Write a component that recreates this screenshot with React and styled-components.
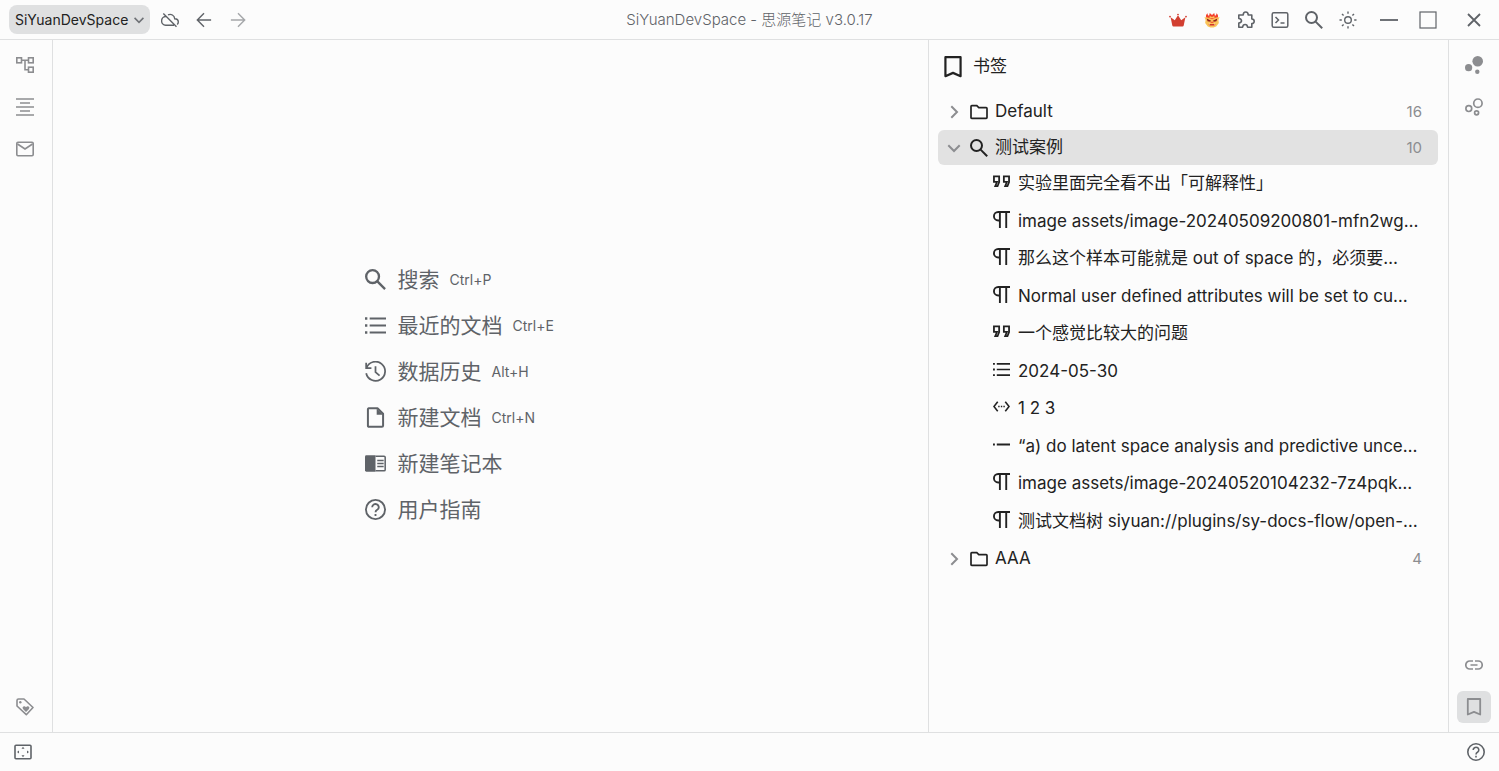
import React from 'react';
import styled, { createGlobalStyle } from 'styled-components';

const GlobalStyle = createGlobalStyle`
  * { box-sizing: border-box; }
  body {
    margin: 0;
    background: #fcfcfc;
    color: #222;
    font-family: Inter, "Noto Sans CJK SC", sans-serif;
    font-size: 17px;
    line-height: 25px;
  }
  button { font: inherit; color: inherit; background: none; border: 0; padding: 0; margin: 0; }
  ul { list-style: none; margin: 0; padding: 0; }
`;

const Page = styled.div`
  display: flex;
  flex-direction: column;
  min-height: 100vh;
`;

const Header = styled.header`
  display: grid;
  grid-template-columns: 1fr auto 1fr;
  align-items: center;
  height: 40px;
  border-bottom: 1px solid #dfe0e1;
  color: #5f6368;
`;

const Group = styled.div`
  display: flex;
  align-items: center;
  justify-content: ${(p) => (p.$end ? 'flex-end' : 'flex-start')};
`;

const Workspace = styled.button`
  display: flex;
  align-items: center;
  justify-content: space-between;
  width: 141px;
  height: 29px;
  margin: 0 3px 0 9px;
  padding: 0 4px 0 6px;
  border-radius: 8px;
  background: #dfe0e1;
  color: #222;
  font-size: 14px;
  svg { color: #6f7276; }
`;

const Title = styled.h1`
  margin: 0;
  font-size: 15px;
  font-weight: 300;
  line-height: 20px;
`;

const BarButton = styled.button`
  display: flex;
  align-items: center;
  justify-content: center;
  width: 34px;
  height: 32px;
  opacity: ${(p) => (p.disabled ? 0.55 : 1)};
`;

const WindowControls = styled.div`
  display: grid;
  grid-template-columns: 35px 43px 50px;
  justify-items: center;
  margin-left: 6px;
`;

const Body = styled.div`
  display: flex;
  flex: 1;
`;

const Dock = styled.nav`
  display: flex;
  flex-direction: column;
  align-items: center;
  gap: 10px;
  flex: none;
  width: ${(p) => (p.$right ? '51px' : '53px')};
  padding: 9px ${(p) => (p.$right ? '0' : '3px')} 9px 0;
  border: 0 solid #dfe0e1;
  border-width: ${(p) => (p.$right ? '0 0 0 1px' : '0 1px 0 0')};
`;

const DockButton = styled.button`
  display: flex;
  align-items: center;
  justify-content: center;
  width: 34px;
  height: 32px;
  border-radius: 6px;
  color: #8c8d90;
  background: ${(p) => (p.$active ? '#dfe0e1' : 'transparent')};
`;

const Spacer = styled.div`
  flex: 1;
`;

const Main = styled.main`
  display: flex;
  flex: 1;
  align-items: center;
  justify-content: center;
  padding-top: 16px;
`;

const Menu = styled.ul`
  width: 252px;
`;

const MenuButton = styled.button`
  display: flex;
  align-items: center;
  height: 46px;
  color: #5f6368;
  font-size: 21px;
  white-space: nowrap;
  svg { margin-right: 12px; }
`;

const Shortcut = styled.kbd`
  margin-left: 10px;
  font-family: inherit;
  font-size: 14px;
`;

const Panel = styled.aside`
  flex: none;
  width: 520px;
  padding: 0 10px 0 9px;
  border-left: 1px solid #dfe0e1;
`;

const PanelTitle = styled.h2`
  display: flex;
  align-items: center;
  gap: 9px;
  height: 53px;
  margin: 0;
  padding-left: 4px;
  font-size: 17px;
  font-weight: 400;
`;

const GroupRow = styled.button`
  display: flex;
  align-items: center;
  width: 100%;
  height: 35px;
  margin-top: 1px;
  padding: 0 16px 0 7px;
  border-radius: 6px;
  background: ${(p) => (p.$open ? '#e2e2e2' : 'transparent')};
`;

const Arrow = styled.span`
  display: flex;
  margin-right: 7px;
  color: #8c8d90;
`;

const GroupName = styled.span`
  margin-left: 7px;
`;

const Count = styled.span`
  margin-left: auto;
  color: #8c8d90;
  font-size: 15px;
`;

const ItemButton = styled.button`
  display: flex;
  align-items: center;
  width: 100%;
  height: 37px;
  padding: 0 16px 0 55px;
  white-space: nowrap;
  li:nth-child(even) > & { height: 38px; }
  svg { margin: 0 8px 4px 0; }
`;

const Footer = styled.footer`
  display: flex;
  align-items: center;
  justify-content: space-between;
  height: 39px;
  padding: 0 6px;
  border-top: 1px solid #dfe0e1;
  color: #5f6368;
`;

const Svg = styled.svg`
  display: block;
  flex: none;
`;

/* Line icons share an 18-unit grid. */
const line = (w) => ({ fill: 'none', stroke: 'currentColor', strokeWidth: w });

const ICONS = {
  down: <path d="M3.300 6.300L9 12l5.700-5.700" {...line(2)} />,
  right: <path d="M6.300 3.300L12 9l-5.700 5.700" {...line(2)} />,
  cloudOff: (
    <path d="M5.300 5.500A4 4 0 0 0 4.700 14.300H13M7 3.900a4.600 4.600 0 0 1 6.700 3.800c2.200 0 3.600 1.400 3.600 3.300 0 1-.4 1.900-1.100 2.500M2.300 2.500l13.200 13.200" {...line(1.4)} />
  ),
  back: <path d="M17 9H2M9 1.500L1.500 9 9 16.500" {...line(1.6)} />,
  forward: <path d="M1 9h15M9 1.500L16.500 9 9 16.500" {...line(1.6)} />,
  crown: (
    <g fill="#d23f31">
      <path d="M1.600 6.300l4.200 3L8.500 5h1l2.700 4.300 4.200-3-1.700 8.200q-.2 1-1.200 1h-9q-1 0-1.200-1z" />
      <circle cx="1" cy="5.600" r=".9" />
      <circle cx="9" cy="3.600" r=".9" />
      <circle cx="17" cy="5.600" r=".9" />
    </g>
  ),
  ogre: (
    <g>
      <path d="M2.500 6.500C1.500 4 2.800 2.300 4 1.500c0 1.700.6 2.600 1.700 2.800L6.500 1 9 3.500 11.500 1l.8 3.300c1.100-.2 1.700-1.100 1.700-2.800 1.200.8 2.500 2.500 1.500 5L13 9H5z" fill="#f4402c" />
      <path d="M6.500 4.500L9 5.500l2.500-1 .5 2.500H6z" fill="#fac35a" />
      <path d="M.5 6l4 .2 4.500 2 4.500-2 4-.2-1.300 3 .5 3.500-3 3.800-3 1.200H7.300l-3-1.200-3-3.800.5-3.500z" fill="#fac35a" />
      <path d="M3 7.200L8 9.800l-1 1.300-3-.7zM15 7.200L10 9.800l1 1.300 3-.7z" fill="#8e1c1c" />
      <path d="M7.800 11h2.400l.6 1.200H7.200z" fill="#f4402c" />
      <path d="M5 13.500h8l-1.500 1.800h-5z" fill="#d0342c" />
      <path d="M5.700 13.300h1.200l-.6 1.200zM11.100 13.300h1.200l-.6 1.200z" fill="#fff" />
    </g>
  ),
  puzzle: (
    <path
      d="M1.800 4h4.400c0-4 5-4 5 0h3.600v4c3.200 0 3.200 4.600 0 4.600v3.600h-4.200c-.4-3.600-4.600-3.600-5 0H1.800v-4.200c3.600-.5 3.600-4 0-4.500z"
      strokeLinejoin="round"
      {...line(1.6)}
    />
  ),
  terminal: (
    <g {...line(1.5)}>
      <rect x="1.200" y="1.700" width="15.600" height="14.600" rx="1.500" />
      <path d="M4.500 6l3 3-3 3M9.500 12h4" />
    </g>
  ),
  search: (
    <g {...line(2)}>
      <circle cx="6.500" cy="6.500" r="5.500" />
      <path d="M10.600 10.600l6.600 6.600" />
    </g>
  ),
  sun: (
    <g {...line(1.4)}>
      <circle cx="9" cy="9" r="3.300" />
      <path d="M9 .5v2.300M9 15.200v2.300M.5 9h2.300M15.200 9h2.300M3 3l1.600 1.600M13.400 13.400L15 15M15 3l-1.600 1.600M4.600 13.400L3 15" />
    </g>
  ),
  minimize: <path d="M0 9h18" {...line(1.8)} />,
  maximize: <rect x="1" y="1" width="16" height="16" {...line(1.2)} />,
  close: <path d="M3 3l12 12M15 3L3 15" {...line(1.8)} />,
  tree: (
    <g {...line(1.6)}>
      <rect x=".8" y="1.800" width="4.700" height="5" />
      <rect x="12.500" y="1.800" width="4.700" height="5" />
      <rect x="12.500" y="11.200" width="4.700" height="5" />
      <path d="M5.500 4.300h7M9 4.300v9.400h3.500" />
    </g>
  ),
  outline: <path d="M0 1h18M4 5h10M0 9h18M4 13h10M0 17h18" {...line(1.7)} />,
  mail: (
    <g {...line(1.6)}>
      <rect x=".8" y="2.300" width="16.400" height="13.400" rx="1.200" />
      <path d="M1.500 4L9 9l7.500-5" />
    </g>
  ),
  tag: (
    <g>
      <path d="M1 2.500Q1 1 2.500 1H8l9 8.500-6.700 7.200L1 8z" strokeLinejoin="round" {...line(1.6)} />
      <circle cx="4.300" cy="4.300" r="1.200" fill="currentColor" />
      <path d="M10 14l-3-3C5.500 8.500 8.700 7.300 10 9.300c1.300-2 4.500-.8 3 1.700z" fill="currentColor" />
    </g>
  ),
  bubbles: (
    <g fill="currentColor">
      <circle cx="12.700" cy="5.300" r="5.300" />
      <circle cx="3.600" cy="11.700" r="3.600" />
      <circle cx="12.300" cy="15.700" r="2.200" />
    </g>
  ),
  bubbleLines: (
    <g {...line(1.7)}>
      <circle cx="12.900" cy="5.200" r="4.200" />
      <circle cx="3.800" cy="10.600" r="2.900" />
      <circle cx="11.600" cy="14.800" r="2" />
    </g>
  ),
  link: <path d="M8 5H4.800a4 4 0 0 0 0 8H8M10 5h3.200a4 4 0 0 1 0 8H10M5.500 9h7" {...line(1.7)} />,
  bookmark: <path d="M2.800 1h12.400v15.500L9 13.800l-6.200 2.700z" strokeLinejoin="round" {...line(1.8)} />,
  folder: <path d="M1 3.500q0-.8.800-.8h5l2 2h7.400q.8 0 .8.800v9q0 .8-.8.800H1.800q-.8 0-.8-.8z" {...line(1.7)} />,
  quote: <path d="M1 3.500h5.500v6L4.800 14H2.400l1.800-4.500H1zM11.500 3.500H17v6L15.300 14h-2.400l1.800-4.500h-3.200z" {...line(1.9)} />,
  paragraph: <path d="M18 1H5.500a4.500 4.500 0 0 0 0 9H7.300M7.300 1v17M14 1v17" {...line(2)} />,
  list: (
    <g {...line(1.8)}>
      <path d="M4 3h14M4 9h14M4 15h14" />
      <path d="M0 3h2M0 9h2M0 15h2" strokeWidth="2" />
    </g>
  ),
  code: <path d="M5 4L1 9l4 5M13 4l4 5-4 5M5.500 9h1.500M8.300 9h1.500M11 9h1.500" {...line(1.7)} />,
  listItem: <path d="M0 9h2M4 9h14" {...line(2)} />,
  history: <path d="M1.300 6A8.200 8.200 0 1 1 1 10.500M1 1.500V6h4.500M9 4.500v5l3.500 3" {...line(1.5)} />,
  file: (
    <g>
      <path d="M3.200 1h7.500l4.800 4.800V16q0 1-1 1H3.500q-1 0-1-1V2q0-1 1-1z" strokeLinejoin="round" {...line(1.7)} />
      <path d="M10 1v5.700h5.500z" fill="currentColor" />
    </g>
  ),
  reader: (
    <g>
      <path d="M1.200 2H9v14H1.200Q0 16 0 14.800V3.200Q0 2 1.200 2z" fill="currentColor" />
      <path d="M9 2.700h7.300q1 0 1 1v10.600q0 1-1 1H9" {...line(1.3)} />
      <path d="M10.500 6.500h5.500M10.500 9h5.500M10.500 11.500h5.500" {...line(1.3)} />
    </g>
  ),
  help: (
    <g {...line(1.6)}>
      <circle cx="9" cy="9" r="8.200" />
      <path d="M6.200 7a2.800 2.600 0 1 1 4.500 2Q9 10 9 11.400M9 12.800v1.700" />
    </g>
  ),
  dockToggle: (
    <g>
      <rect x="1" y="2.200" width="16" height="13.600" rx="1" {...line(1.6)} />
      <path d="M9 3.800l1.500 2h-3zM9 14.200l1.500-2h-3zM3 9l2-1.500v3zM15 9l-2-1.500v3z" fill="currentColor" />
    </g>
  ),
};

function Icon({ name, size = 18 }) {
  return (
    <Svg width={size} height={size} viewBox="0 0 18 18" aria-hidden="true">
      {ICONS[name]}
    </Svg>
  );
}

const TOOLS = [
  ['crown', '会员'],
  ['ogre', '插件'],
  ['puzzle', '集市'],
  ['terminal', '命令面板'],
  ['search', '搜索'],
  ['sun', '外观模式'],
];

const MENU = [
  ['search', '搜索', 'Ctrl+P'],
  ['list', '最近的文档', 'Ctrl+E'],
  ['history', '数据历史', 'Alt+H'],
  ['file', '新建文档', 'Ctrl+N'],
  ['reader', '新建笔记本'],
  ['help', '用户指南'],
];

const BOOKMARKS = [
  ['quote', '实验里面完全看不出「可解释性」'],
  ['paragraph', 'image assets/image-20240509200801-mfn2wg…'],
  ['paragraph', '那么这个样本可能就是 out of space 的，必须要…'],
  ['paragraph', 'Normal user defined attributes will be set to cu…'],
  ['quote', '一个感觉比较大的问题'],
  ['list', '2024-05-30'],
  ['code', '1 2 3'],
  ['listItem', '“a) do latent space analysis and predictive unce…'],
  ['paragraph', 'image assets/image-20240520104232-7z4pqk…'],
  ['paragraph', '测试文档树 siyuan://plugins/sy-docs-flow/open-…'],
];

function BookmarkGroup({ icon, name, count, items }) {
  const open = Boolean(items);
  return (
    <li>
      <GroupRow $open={open} aria-expanded={open}>
        <Arrow>
          <Icon name={open ? 'down' : 'right'} />
        </Arrow>
        <Icon name={icon} />
        <GroupName>{name}</GroupName>
        <Count>{count}</Count>
      </GroupRow>
      {open && (
        <ul>
          {items.map(([itemIcon, text]) => (
            <li key={text}>
              <ItemButton>
                <Icon name={itemIcon} size={17} />
                <span>{text}</span>
              </ItemButton>
            </li>
          ))}
        </ul>
      )}
    </li>
  );
}

function DockItem({ icon, label, active }) {
  return (
    <DockButton $active={active} aria-label={label}>
      <Icon name={icon} />
    </DockButton>
  );
}

export default function App() {
  return (
    <Page>
      <GlobalStyle />
      <Header>
        <Group>
          <Workspace>
            SiYuanDevSpace
            <Icon name="down" size={14} />
          </Workspace>
          <BarButton aria-label="云端同步"><Icon name="cloudOff" /></BarButton>
          <BarButton aria-label="后退"><Icon name="back" size={16} /></BarButton>
          <BarButton aria-label="前进" disabled><Icon name="forward" size={16} /></BarButton>
        </Group>
        <Title>SiYuanDevSpace - 思源笔记 v3.0.17</Title>
        <Group $end>
          {TOOLS.map(([icon, label]) => (
            <BarButton key={icon} aria-label={label}>
              <Icon name={icon} size={icon === 'ogre' ? 16 : 18} />
            </BarButton>
          ))}
          <WindowControls>
            <BarButton aria-label="最小化"><Icon name="minimize" /></BarButton>
            <BarButton aria-label="最大化"><Icon name="maximize" /></BarButton>
            <BarButton aria-label="关闭"><Icon name="close" /></BarButton>
          </WindowControls>
        </Group>
      </Header>
      <Body>
        <Dock>
          <DockItem icon="tree" label="文档树" />
          <DockItem icon="outline" label="大纲" />
          <DockItem icon="mail" label="收集箱" />
          <Spacer />
          <DockItem icon="tag" label="标签" />
        </Dock>
        <Main>
          <Menu>
            {MENU.map(([icon, text, keys]) => (
              <li key={text}>
                <MenuButton>
                  <Icon name={icon} size={21} />
                  {text}
                  {keys && <Shortcut>{keys}</Shortcut>}
                </MenuButton>
              </li>
            ))}
          </Menu>
        </Main>
        <Panel>
          <PanelTitle>
            <Icon name="bookmark" size={22} />
            书签
          </PanelTitle>
          <ul>
            <BookmarkGroup icon="folder" name="Default" count={16} />
            <BookmarkGroup icon="search" name="测试案例" count={10} items={BOOKMARKS} />
            <BookmarkGroup icon="folder" name="AAA" count={4} />
          </ul>
        </Panel>
        <Dock $right>
          <DockItem icon="bubbles" label="关系图" />
          <DockItem icon="bubbleLines" label="全局关系图" />
          <Spacer />
          <DockItem icon="link" label="反向链接" />
          <DockItem icon="bookmark" label="书签" active />
        </Dock>
      </Body>
      <Footer>
        <BarButton aria-label="停靠栏"><Icon name="dockToggle" /></BarButton>
        <BarButton aria-label="帮助"><Icon name="help" /></BarButton>
      </Footer>
    </Page>
  );
}
